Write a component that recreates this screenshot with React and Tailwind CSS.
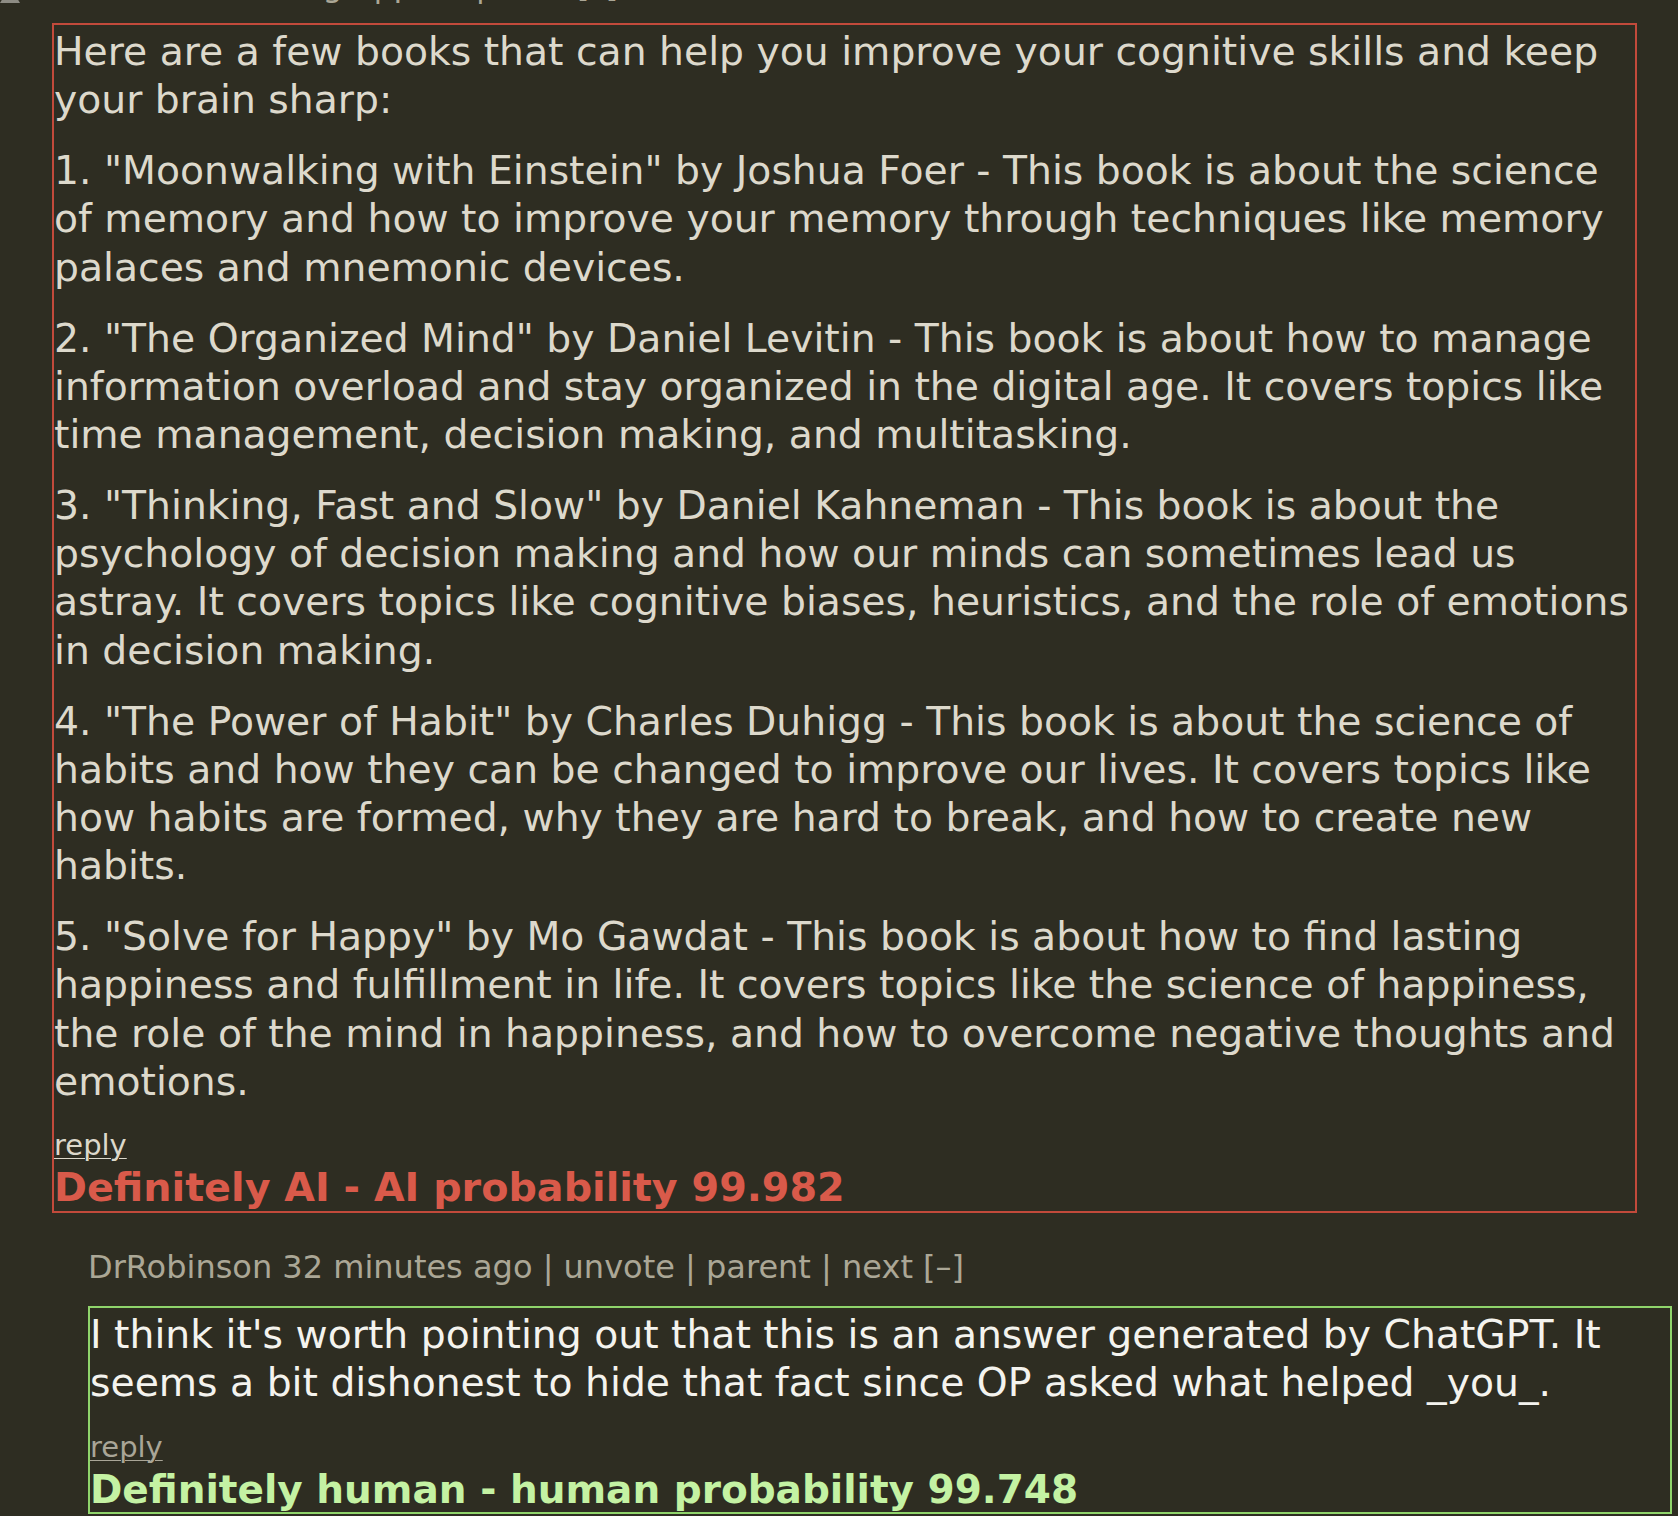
import React from 'react';

const firstComment = [
  [
    'Here are a few books that can help you improve your cognitive skills and keep',
    'your brain sharp:',
  ],
  [
    '1. "Moonwalking with Einstein" by Joshua Foer - This book is about the science',
    'of memory and how to improve your memory through techniques like memory',
    'palaces and mnemonic devices.',
  ],
  [
    '2. "The Organized Mind" by Daniel Levitin - This book is about how to manage',
    'information overload and stay organized in the digital age. It covers topics like',
    'time management, decision making, and multitasking.',
  ],
  [
    '3. "Thinking, Fast and Slow" by Daniel Kahneman - This book is about the',
    'psychology of decision making and how our minds can sometimes lead us',
    'astray. It covers topics like cognitive biases, heuristics, and the role of emotions',
    'in decision making.',
  ],
  [
    '4. "The Power of Habit" by Charles Duhigg - This book is about the science of',
    'habits and how they can be changed to improve our lives. It covers topics like',
    'how habits are formed, why they are hard to break, and how to create new',
    'habits.',
  ],
  [
    '5. "Solve for Happy" by Mo Gawdat - This book is about how to find lasting',
    'happiness and fulfillment in life. It covers topics like the science of happiness,',
    'the role of the mind in happiness, and how to overcome negative thoughts and',
    'emotions.',
  ],
];

const secondComment = [
  [
    "I think it's worth pointing out that this is an answer generated by ChatGPT. It",
    'seems a bit dishonest to hide that fact since OP asked what helped _you_.',
  ],
];

const Paragraphs = ({ paras, color }) => (
  <div className={`text-[39.3px] leading-[48.2px] whitespace-nowrap ${color}`}>
    {paras.map((lines, i) => (
      <p key={i} className={i > 0 ? 'mt-[22.8px]' : ''}>
        {lines.map((line, j) => (
          <span key={j} className="block">
            {line}
          </span>
        ))}
      </p>
    ))}
  </div>
);

const Meta = ({ children }) => (
  <div className="text-[32px] leading-[37px] text-[#aba796] whitespace-nowrap">{children}</div>
);

const App = () => {
  return (
    <div className="min-h-screen w-full overflow-hidden bg-[#2e2d22] font-['Verdana','DejaVu_Sans',sans-serif]">
      {/* first comment, its header sits above the top of the window */}
      <div className="flex -mt-[33.5px]">
        <div className="w-[52px] shrink-0">
          <svg width="20" height="17" viewBox="0 0 20 17" className="mt-[19.5px] block">
            <polygon points="10,0 20,17 0,17" fill="#8d8c84" />
          </svg>
        </div>
        <div className="w-[1585px] shrink-0">
          <Meta>drcode 2 hours ago | prev | next [–]</Meta>
          <div className="mt-[19.5px] border-2 border-[#c24a3b] pt-[3px]">
            <Paragraphs paras={firstComment} color="text-[#ddd9cc]" />
            <div className="mt-[20.4px] text-[29px] leading-[39px]">
              <a className="text-[#dcd8cb] underline underline-offset-[3px] decoration-1">reply</a>
            </div>
            <div className="text-[39.7px] font-bold leading-[45.4px] text-[#d95a4a] whitespace-nowrap">
              Definitely AI - AI probability 99.982
            </div>
          </div>
        </div>
      </div>

      {/* reply */}
      <div className="ml-[88px] mt-[36.5px] w-[1584px]">
        <Meta>DrRobinson 32 minutes ago | unvote | parent | next [–]</Meta>
        <div className="mt-[19.5px] border-2 border-[#8fd46b] pt-[3px]">
          <Paragraphs paras={secondComment} color="text-[#f4f3ee]" />
          <div className="mt-[20.4px] text-[29px] leading-[39px]">
            <a className="text-[#a9a597] underline underline-offset-[3px] decoration-1">reply</a>
          </div>
          <div className="text-[39px] font-bold leading-[45.4px] text-[#c4f2a3] whitespace-nowrap">
            Definitely human - human probability 99.748
          </div>
        </div>
      </div>
    </div>
  );
};

export default App;
